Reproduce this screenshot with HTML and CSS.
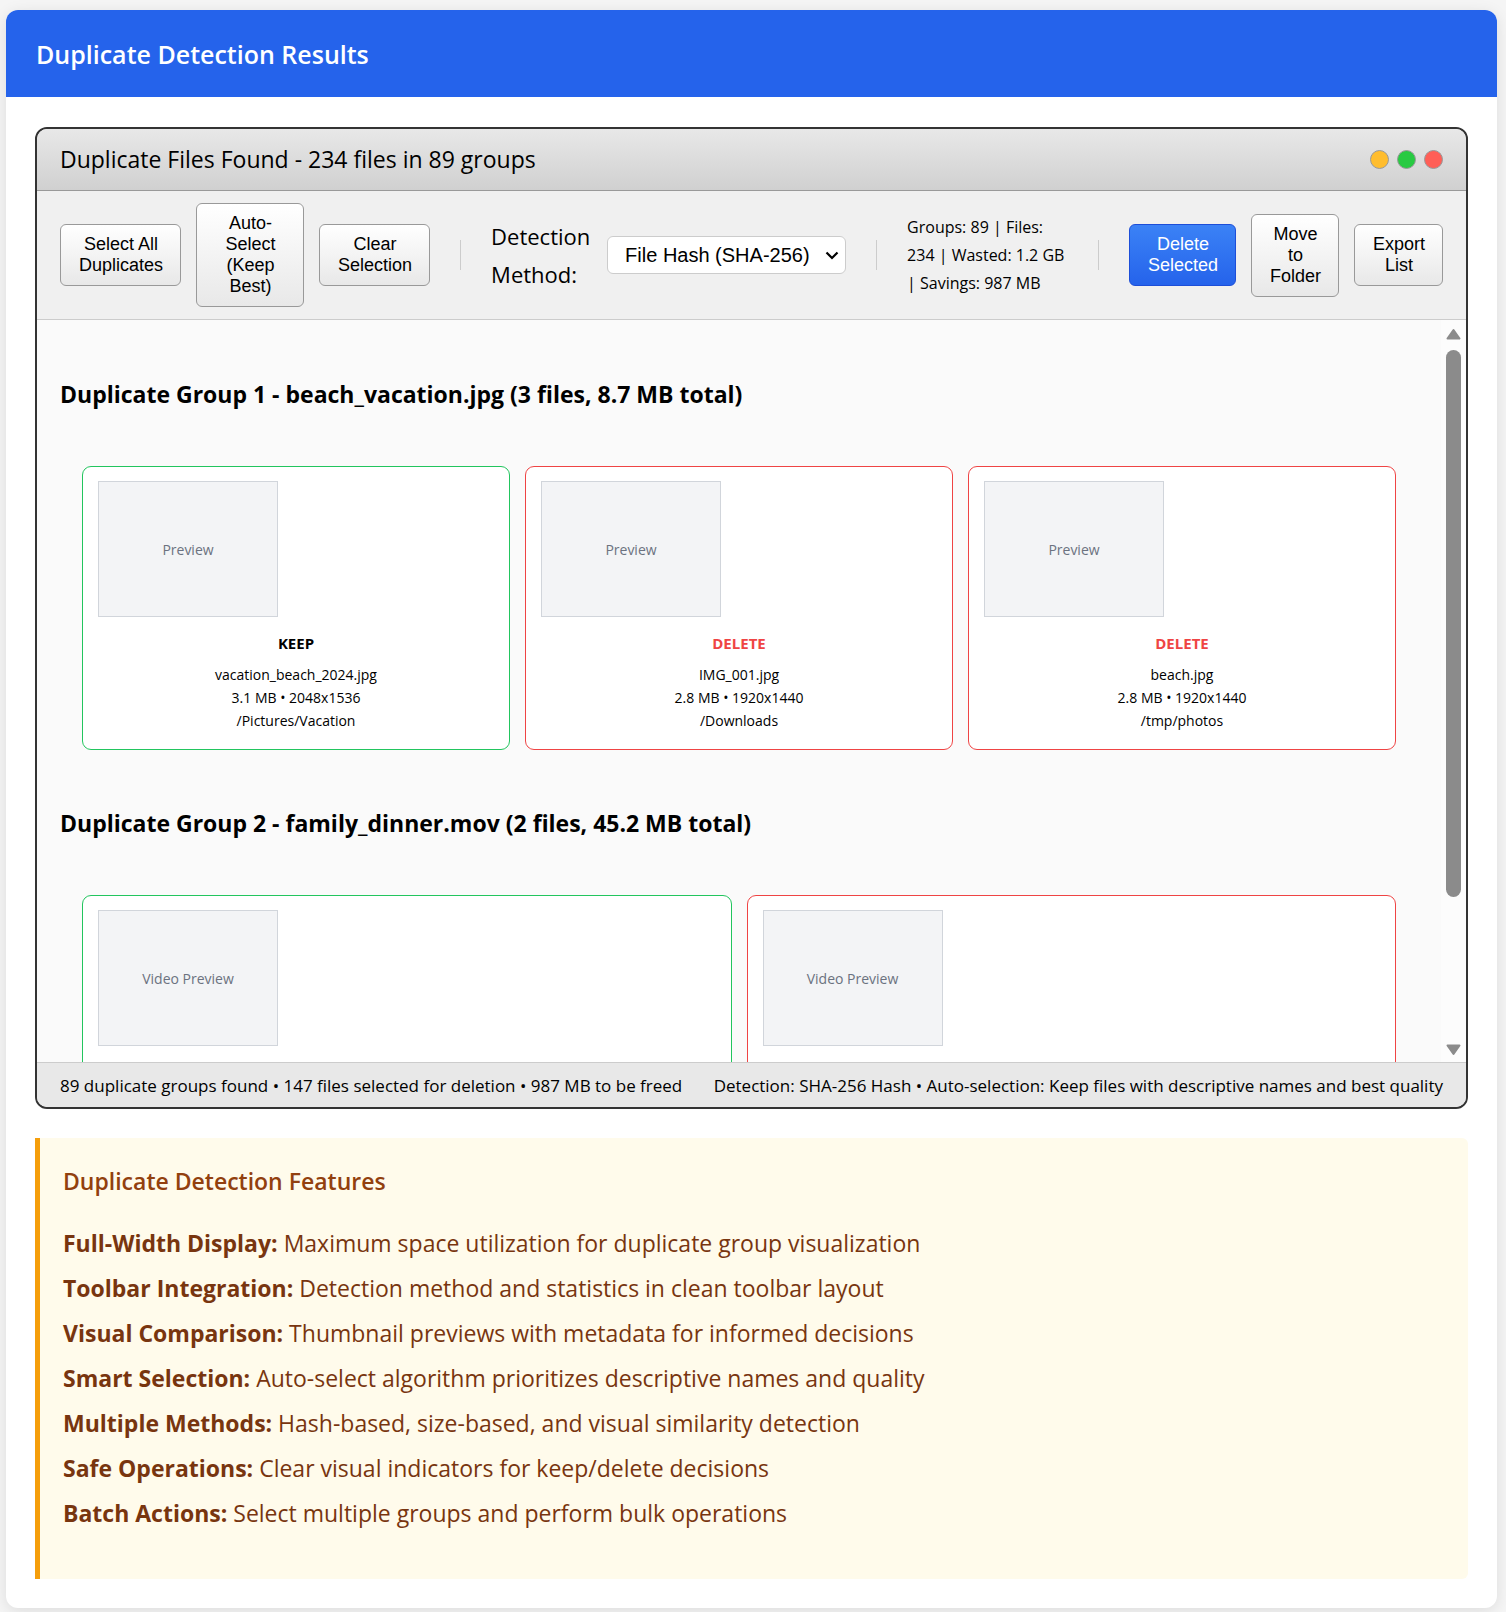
FILE: index.html
```html
<!DOCTYPE html>
<html lang="en">
<head>
<meta charset="utf-8">
<meta name="viewport" content="width=device-width, initial-scale=1">
<title>Duplicate Detection Results</title>
<link rel="stylesheet" href="styles.css">
</head>
<body>
<main class="card">
  <header class="card-header"><h1 class="card-title">Duplicate Detection Results</h1></header>
  <div class="card-body">
    <section class="window">
      <div class="titlebar">
        <h2 class="window-title">Duplicate Files Found - 234 files in 89 groups</h2>
        <div class="controls">
          <span class="dot dot-min"></span>
          <span class="dot dot-max"></span>
          <span class="dot dot-close"></span>
        </div>
      </div>
      <div class="toolbar">
        <button type="button" class="btn">Select All Duplicates</button>
        <button type="button" class="btn btn-wide">Auto-Select (Keep Best)</button>
        <button type="button" class="btn">Clear Selection</button>
        <span class="separator"></span>
        <label class="method-label" for="method">Detection Method:</label>
        <div class="select-wrap">
          <select id="method" class="select">
            <option>File Hash (SHA-256)</option>
            <option>File Size</option>
            <option>Visual Similarity</option>
          </select>
          <svg class="chevron" viewBox="0 0 14 9" aria-hidden="true"><path d="M1.5 1.5 7 7l5.500-5.500" fill="none" stroke="#000" stroke-width="2.200"/></svg>
        </div>
        <span class="separator"></span>
        <p class="stats">Groups: 89 | Files: 234 | Wasted: 1.2 GB | Savings: 987 MB</p>
        <span class="separator"></span>
        <button type="button" class="btn btn-primary">Delete Selected</button>
        <button type="button" class="btn">Move to Folder</button>
        <button type="button" class="btn">Export List</button>
      </div>
      <div class="content">
        <div class="scroller">
          <h3 class="group-title">Duplicate Group 1 - beach_vacation.jpg (3 files, 8.7 MB total)</h3>
          <div class="group">
            <article class="file keep">
              <div class="preview">Preview</div>
              <strong class="verdict">KEEP</strong>
              <p class="meta">vacation_beach_2024.jpg<br>3.1 MB • 2048x1536<br>/Pictures/Vacation</p>
            </article>
            <article class="file delete">
              <div class="preview">Preview</div>
              <strong class="verdict">DELETE</strong>
              <p class="meta">IMG_001.jpg<br>2.8 MB • 1920x1440<br>/Downloads</p>
            </article>
            <article class="file delete">
              <div class="preview">Preview</div>
              <strong class="verdict">DELETE</strong>
              <p class="meta">beach.jpg<br>2.8 MB • 1920x1440<br>/tmp/photos</p>
            </article>
          </div>
          <h3 class="group-title">Duplicate Group 2 - family_dinner.mov (2 files, 45.2 MB total)</h3>
          <div class="group">
            <article class="file keep">
              <div class="preview">Video Preview</div>
            </article>
            <article class="file delete">
              <div class="preview">Video Preview</div>
            </article>
          </div>
        </div>
        <div class="scrollbar" aria-hidden="true">
          <svg class="arrow" viewBox="0 0 15 12"><path d="M7.500 2 13.500 10.500H1.500Z" fill="#8b8b8b" stroke="#8b8b8b" stroke-width="2" stroke-linejoin="round"/></svg>
          <div class="track"><div class="thumb"></div></div>
          <svg class="arrow" viewBox="0 0 15 12"><path d="M7.500 10 13.500 1.500H1.500Z" fill="#8b8b8b" stroke="#8b8b8b" stroke-width="2" stroke-linejoin="round"/></svg>
        </div>
      </div>
      <footer class="statusbar">
        <span>89 duplicate groups found • 147 files selected for deletion • 987 MB to be freed</span>
        <span>Detection: SHA-256 Hash • Auto-selection: Keep files with descriptive names and best quality</span>
      </footer>
    </section>
    <section class="notes">
      <h2 class="notes-title">Duplicate Detection Features</h2>
      <ul class="notes-list">
        <li><strong>Full-Width Display:</strong> Maximum space utilization for duplicate group visualization</li>
        <li><strong>Toolbar Integration:</strong> Detection method and statistics in clean toolbar layout</li>
        <li><strong>Visual Comparison:</strong> Thumbnail previews with metadata for informed decisions</li>
        <li><strong>Smart Selection:</strong> Auto-select algorithm prioritizes descriptive names and quality</li>
        <li><strong>Multiple Methods:</strong> Hash-based, size-based, and visual similarity detection</li>
        <li><strong>Safe Operations:</strong> Clear visual indicators for keep/delete decisions</li>
        <li><strong>Batch Actions:</strong> Select multiple groups and perform bulk operations</li>
      </ul>
    </section>
  </div>
</main>
</body>
</html>
```

FILE: styles.css
```css
* { box-sizing: border-box; margin: 0; padding: 0; }

body {
  padding: 10px 9px 4px 6px;
  background: #f5f5f5;
  color: #000;
  font: 23px/38px "Open Sans", "Noto Sans", sans-serif;
}

.card {
  background: #fff;
  border-radius: 12px;
  box-shadow: 0 3px 15px rgba(0, 0, 0, 0.1);
}

.card-header {
  padding: 25px 30px 23px;
  background: #2563eb;
  color: #fff;
  border-radius: 12px 12px 0 0;
}

.card-title { font-size: 25px; line-height: 39px; font-weight: 600; }

.card-body { padding: 30px 29px 29px; }

/* Application window */
.window {
  border: 2px solid #333;
  border-radius: 12px;
  background: #fafafa;
  overflow: hidden;
}

.titlebar {
  display: flex;
  align-items: center;
  justify-content: space-between;
  padding: 11px 23px;
  background: linear-gradient(#e8e8e8, #d0d0d0);
  border-bottom: 1px solid #999;
}

.window-title { font-size: 23px; line-height: 39px; font-weight: 400; }

.controls { display: flex; gap: 8px; }

.dot { width: 19px; height: 19px; border: 1px solid #999; border-radius: 50%; }
.dot-min { background: #ffbd2e; }
.dot-max { background: #28ca42; }
.dot-close { background: #ff5f57; }

.toolbar {
  display: flex;
  align-items: center;
  gap: 15px;
  padding: 12px 23px;
  background: #f0f0f0;
  border-bottom: 1px solid #ccc;
}

.btn {
  flex: none;
  width: min-content;
  padding: 9px 17px 9px 18px;
  font: 18px/21px "Liberation Sans", Arial, sans-serif;
  color: #000;
  background: linear-gradient(#fff, #e8e8e8);
  border: 1px solid #999;
  border-radius: 6px;
}

.btn-wide { width: 108px; }

.btn-primary {
  color: #fff;
  background: linear-gradient(#3b82f6, #2563eb);
  border-color: #1d4ed8;
}

.separator { flex: none; width: 1px; height: 30px; margin: 0 15px; background: #ccc; }

.method-label { flex: none; width: 101px; font-size: 22px; }

.select-wrap { position: relative; flex: none; width: 239px; }

.select {
  display: block;
  appearance: none;
  width: 100%;
  height: 38px;
  padding: 0 17px;
  font: 20px "Liberation Sans", Arial, sans-serif;
  color: #000;
  background: #fff;
  border: 1px solid #ccc;
  border-radius: 6px;
}

.chevron { position: absolute; top: 15px; right: 7px; width: 14px; height: 9px; pointer-events: none; }

.stats { flex: 1; font-size: 16px; line-height: 28px; }

.content { display: flex; height: 742px; }

.scroller { flex: 1; padding: 34px 23px; overflow: auto; scrollbar-width: none; }

.group-title { padding: 21px 0 53px; font-size: 23px; line-height: 38px; font-weight: 700; }

.group { display: flex; gap: 15px; padding: 0 22px; margin-bottom: 33px; }

.file {
  flex: 1;
  display: flex;
  flex-direction: column;
  padding: 14px 15px 17px;
  background: #fff;
  border: 1px solid #22c55e;
  border-radius: 9px;
  font-size: 14px;
  line-height: 23px;
  text-align: center;
}

.delete { border-color: #ef4444; }
.delete .verdict { color: #ef4444; }

.preview {
  display: grid;
  place-items: center;
  width: 180px;
  height: 136px;
  margin-bottom: 15px;
  color: #6b7280;
  background: #f3f4f6;
  border: 1px solid #d1d5db;
}

.verdict { margin-bottom: 8px; font-size: 15px; }

.scrollbar {
  display: flex;
  flex-direction: column;
  align-items: center;
  gap: 10px;
  width: 25px;
  padding: 8px 0 6px;
  background: #fcfcfc;
}

.arrow { width: 15px; height: 12px; }
.track { flex: 1; width: 15px; }
.thumb { height: 80%; border-radius: 8px; background: #8b8b8b; }

.statusbar {
  display: flex;
  justify-content: space-between;
  gap: 15px;
  padding: 9px 23px 7px;
  background: #e8e8e8;
  border-top: 1px solid #ccc;
  font-size: 17px;
  line-height: 28px;
}

/* Feature notes */
.notes {
  margin-top: 29px;
  padding: 24px 23px 43px;
  background: #fffbeb;
  border-left: 5px solid #f59e0b;
  border-radius: 0 6px 6px 0;
  color: #78350f;
}

.notes-title { margin-bottom: 21px; font-size: 23px; line-height: 38px; font-weight: 600; color: #92400e; }

.notes-list { list-style: none; line-height: 45px; }
```
